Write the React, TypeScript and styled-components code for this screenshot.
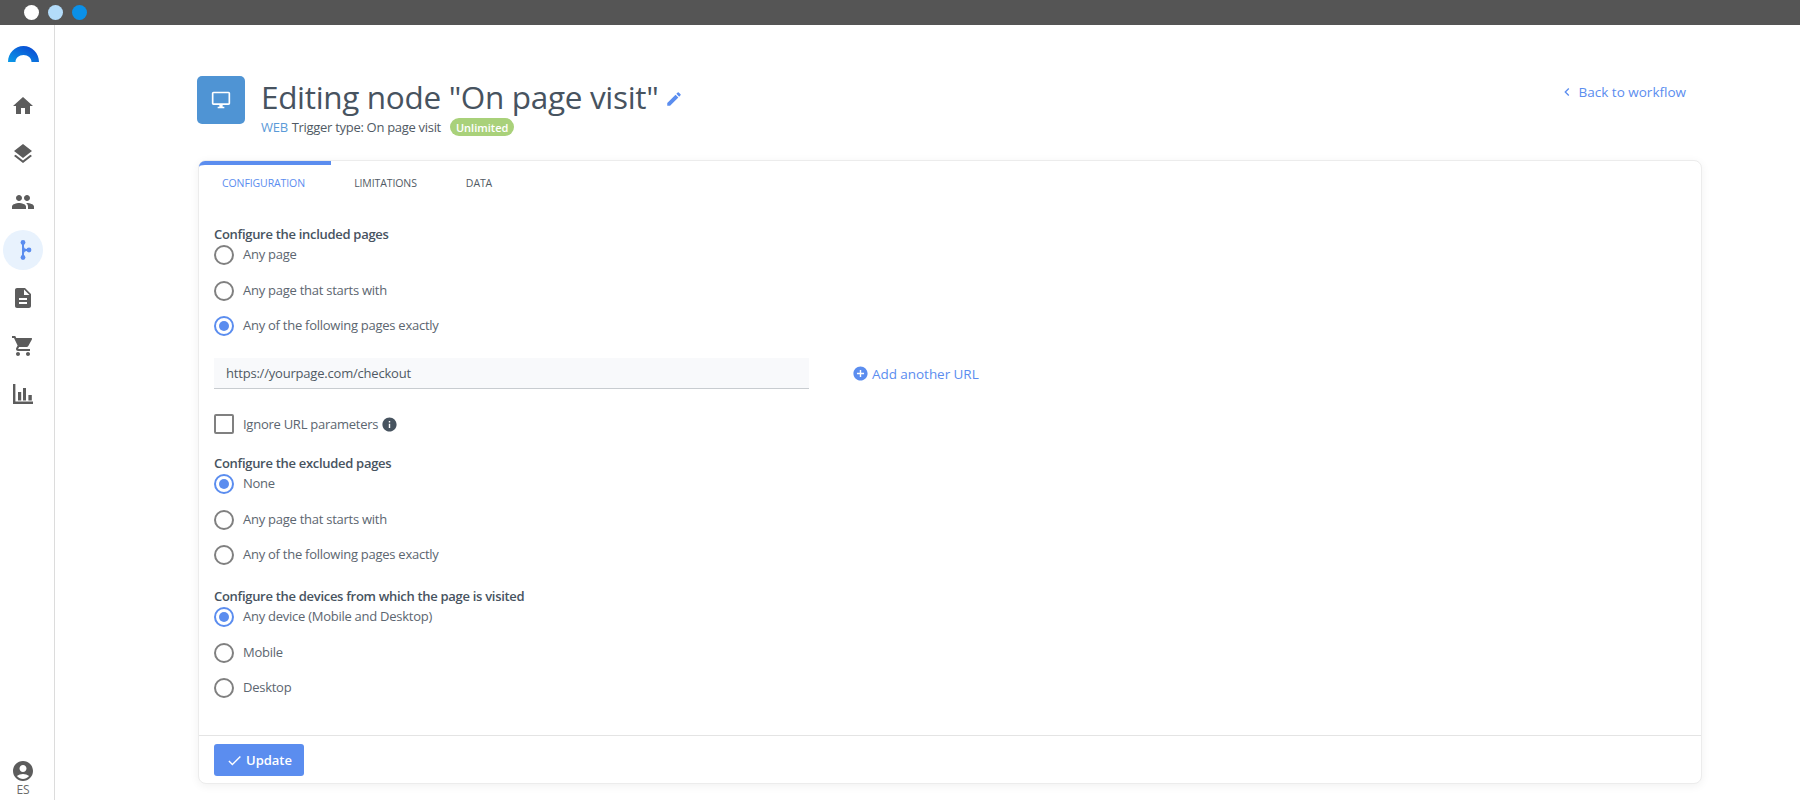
import React from 'react';
import styled, { createGlobalStyle } from 'styled-components';
import {
  MdHome,
  MdLayers,
  MdPeople,
  MdDescription,
  MdShoppingCart,
  MdAccountCircle,
  MdOutlineDesktopWindows,
  MdEdit,
  MdInfo,
  MdAddCircle,
  MdCheck,
  MdChevronLeft,
} from 'react-icons/md';

const GlobalStyle = createGlobalStyle`
  html, body {
    margin: 0;
    padding: 0;
    background: #fff;
    font-family: "Open Sans", "Noto Sans", sans-serif;
    color: #505a64;
  }
  * { box-sizing: border-box; }
`;

const Page = styled.div`
  width: 1800px;
  height: 800px;
  display: flex;
  flex-direction: column;
  overflow: hidden;
`;

const WindowBar = styled.div`
  height: 25px;
  flex-shrink: 0;
  background: #555555;
  display: flex;
  align-items: center;
  gap: 9px;
  padding-left: 24px;
`;

const WindowDot = styled.span<{ $color: string }>`
  width: 15px;
  height: 15px;
  border-radius: 50%;
  background: ${p => p.$color};
`;

const Shell = styled.div`
  flex: 1;
  display: flex;
  min-height: 0;
`;

const Sidebar = styled.nav`
  width: 55px;
  flex-shrink: 0;
  border-right: 1px solid #dcdcdc;
  display: flex;
  flex-direction: column;
  align-items: center;
  padding: 21px 8px 0 0;
`;

const Logo = styled.svg`
  width: 31px;
  height: 16px;
  margin-bottom: 24px;
`;

const NavList = styled.div`
  display: flex;
  flex-direction: column;
  gap: 8px;
  flex: 1;
`;

const NavItem = styled.div<{ $active?: boolean }>`
  width: 40px;
  height: 40px;
  border-radius: 50%;
  display: flex;
  align-items: center;
  justify-content: center;
  color: #5c5c5c;
  background: ${p => (p.$active ? '#e8f2fd' : 'transparent')};
  font-size: 24px;
`;

const Account = styled.div`
  display: flex;
  flex-direction: column;
  align-items: center;
  color: #5c5c5c;
  font-size: 24px;
  padding-bottom: 4px;
  svg { margin-top: -1px; }
`;

const Locale = styled.span`
  font-size: 12px;
  line-height: 13px;
  color: #6a6a6a;
`;

const Main = styled.main`
  flex: 1;
  min-width: 0;
  padding: 51px 98px 0 142px;
`;

const Header = styled.header`
  height: 84px;
  display: flex;
  align-items: flex-start;
`;

const NodeIcon = styled.div`
  width: 48px;
  height: 48px;
  border-radius: 5px;
  background: #4f94d4;
  color: #fff;
  display: flex;
  align-items: center;
  justify-content: center;
  font-size: 20px;
  flex-shrink: 0;
`;

const TitleBlock = styled.div`
  margin-left: 16px;
  flex: 1;
`;

const TitleRow = styled.div`
  display: flex;
  align-items: center;
  height: 41px;
`;

const Title = styled.h1`
  margin: 0;
  font-size: 31.5px;
  line-height: 41px;
  letter-spacing: -0.33px;
  font-weight: 400;
  color: #47535f;
`;

const EditIcon = styled.span`
  display: flex;
  margin-left: 7px;
  margin-top: 5px;
  font-size: 18px;
  color: #5b8def;
`;

const SubRow = styled.div`
  display: flex;
  align-items: center;
  height: 20px;
  font-size: 13px;
  letter-spacing: -0.3px;
  color: #505a64;
`;

const WebTag = styled.span`
  color: #5a9ad8;
  margin-right: 4px;
`;

const Badge = styled.span`
  margin-left: 9px;
  height: 18px;
  padding: 0 6px;
  border-radius: 9px;
  background: #a9d17a;
  color: #fff;
  font-size: 11px;
  letter-spacing: 0;
  font-weight: 600;
  display: flex;
  align-items: center;
`;

const BackLink = styled.a`
  display: flex;
  align-items: center;
  margin: 5px 16px 0 0;
  font-size: 13.5px;
  line-height: 22px;
  color: #5b8def;
  svg { font-size: 16px; margin-right: 4px; }
`;

const Card = styled.section`
  height: 624px;
  margin-left: 1px;
  border: 1px solid #ececec;
  border-radius: 8px;
  box-shadow: 0 2px 10px rgba(0, 0, 0, 0.06);
  display: flex;
  flex-direction: column;
  background: #fff;
`;

const Tabs = styled.div`
  height: 45px;
  display: flex;
  flex-shrink: 0;
`;

const Tab = styled.div<{ $active?: boolean; $width: number }>`
  width: ${p => p.$width}px;
  height: 45px;
  display: flex;
  align-items: center;
  justify-content: center;
  font-size: 10.5px;
  letter-spacing: -0.1px;
  color: ${p => (p.$active ? '#5b8def' : '#505a64')};
  border-top: 4px solid ${p => (p.$active ? '#5b8def' : 'transparent')};
  border-top-left-radius: 6px;
  padding: 0 ${p => (p.$active ? 3 : 0)}px 5px 0;
`;

const Body = styled.div`
  flex: 1;
  padding: 18px 15px 0;
`;

const SectionLabel = styled.div<{ $top?: number }>`
  font-size: 13px;
  letter-spacing: -0.3px;
  line-height: 20px;
  font-weight: 600;
  color: #47535f;
  margin-top: ${p => p.$top ?? 0}px;
  margin-bottom: 1px;
`;

const RadioGroup = styled.div`
  display: flex;
  flex-direction: column;
  gap: 15.5px;
`;

const RadioRow = styled.label`
  display: flex;
  align-items: center;
  height: 20px;
  font-size: 13px;
  letter-spacing: -0.26px;
  color: #5c6670;
`;

const RadioText = styled.span`
  line-height: 18px;
  margin-bottom: 2px;
`;

const RadioMark = styled.span<{ $on?: boolean }>`
  width: 20px;
  height: 20px;
  border-radius: 50%;
  border: 2px solid ${p => (p.$on ? '#5b8def' : '#808080')};
  display: flex;
  align-items: center;
  justify-content: center;
  margin-right: 9px;
  flex-shrink: 0;
  &::after {
    content: '';
    display: ${p => (p.$on ? 'block' : 'none')};
    width: 10px;
    height: 10px;
    border-radius: 50%;
    background: #5b8def;
  }
`;

const UrlRow = styled.div`
  display: flex;
  align-items: center;
  margin-top: 22px;
`;

const UrlInput = styled.div`
  width: 595px;
  height: 31px;
  padding: 0 12px;
  display: flex;
  align-items: center;
  background: #f8f9fb;
  border-bottom: 1px solid #c8ccd0;
  font-size: 13px;
  letter-spacing: -0.2px;
  color: #505a64;
`;

const AddUrl = styled.a`
  display: flex;
  align-items: center;
  margin-left: 43px;
  font-size: 13.5px;
  letter-spacing: -0.05px;
  color: #5b8def;
  svg { font-size: 17px; margin-right: 3px; }
`;

const CheckRow = styled.label`
  display: flex;
  align-items: center;
  height: 20px;
  margin-top: 25px;
  font-size: 13px;
  letter-spacing: -0.26px;
  color: #5c6670;
`;

const CheckMark = styled.span`
  width: 20px;
  height: 20px;
  border: 2px solid #808080;
  border-radius: 2px;
  margin-right: 9px;
`;

const InfoIcon = styled.span`
  display: flex;
  margin-left: 3px;
  font-size: 17px;
  color: #47535f;
`;

const Footer = styled.footer`
  height: 48px;
  flex-shrink: 0;
  border-top: 1px solid #e4e4e4;
  padding: 8px 15px;
`;

const UpdateButton = styled.button`
  width: 90px;
  height: 32px;
  border: 0;
  border-radius: 3px;
  background: #5b8def;
  color: #fff;
  font-family: inherit;
  font-size: 13px;
  font-weight: 600;
  display: flex;
  align-items: center;
  justify-content: center;
  gap: 3px;
  svg { font-size: 17px; }
`;

const FlowIcon = () => (
  <svg width="24" height="24" viewBox="0 0 24 24" fill="none">
    <g stroke="#5b8def" strokeWidth="2">
      <path d="M12 4v16" />
      <path d="M12 8.5c0 2.5 1.5 3.5 4 3.5h2" />
      <path d="M12 15.5c0-2.5 1.5-3.5 4-3.5" />
    </g>
    <g fill="#5b8def">
      <circle cx="12" cy="4.5" r="2.4" />
      <circle cx="12" cy="19.5" r="2.4" />
      <circle cx="18" cy="12" r="2.4" />
    </g>
  </svg>
);

const AxisChartIcon = () => (
  <svg width="24" height="24" viewBox="0 0 24 24" fill="#5c5c5c">
    <path d="M2 2h2.4v17.6H22V22H2z" />
    <path d="M7 10h3.2v8.5H7zM12 6h3v12.5h-3zM17.4 13h3.4v5.5h-3.4z" />
  </svg>
);

const included = ['Any page', 'Any page that starts with'];
const excluded = ['Any page that starts with', 'Any of the following pages exactly'];

const App = () => {
  return (
    <Page>
      <GlobalStyle />
      <WindowBar>
        <WindowDot $color="#ffffff" />
        <WindowDot $color="#b3dcfa" />
        <WindowDot $color="#0a90e8" />
      </WindowBar>
      <Shell>
        <Sidebar>
          <Logo viewBox="0 0 31 16">
            <defs>
              <linearGradient id="logoGrad" x1="0" x2="1" y1="1" y2="0">
                <stop offset="0" stopColor="#0a9be8" />
                <stop offset="1" stopColor="#0a3fd0" />
              </linearGradient>
            </defs>
            <path
              d="M0 16C0 7 7 0 15.5 0S31 7 31 16H23.5C23.5 12 20 9 15.5 9S7.5 12 7.5 16Z"
              fill="url(#logoGrad)"
            />
          </Logo>
          <NavList>
            <NavItem><MdHome /></NavItem>
            <NavItem><MdLayers /></NavItem>
            <NavItem><MdPeople /></NavItem>
            <NavItem $active><FlowIcon /></NavItem>
            <NavItem><MdDescription /></NavItem>
            <NavItem><MdShoppingCart /></NavItem>
            <NavItem><AxisChartIcon /></NavItem>
          </NavList>
          <Account>
            <MdAccountCircle />
            <Locale>ES</Locale>
          </Account>
        </Sidebar>
        <Main>
          <Header>
            <NodeIcon><MdOutlineDesktopWindows /></NodeIcon>
            <TitleBlock>
              <TitleRow>
                <Title>Editing node "On page visit"</Title>
                <EditIcon><MdEdit /></EditIcon>
              </TitleRow>
              <SubRow>
                <WebTag>WEB</WebTag> Trigger type: On page visit
                <Badge>Unlimited</Badge>
              </SubRow>
            </TitleBlock>
            <BackLink><MdChevronLeft /> Back to workflow</BackLink>
          </Header>
          <Card>
            <Tabs>
              <Tab $active $width={132}>CONFIGURATION</Tab>
              <Tab $width={109}>LIMITATIONS</Tab>
              <Tab $width={78}>DATA</Tab>
            </Tabs>
            <Body>
              <SectionLabel>Configure the included pages</SectionLabel>
              <RadioGroup>
                {included.map(text => (
                  <RadioRow key={text}><RadioMark /><RadioText>{text}</RadioText></RadioRow>
                ))}
                <RadioRow><RadioMark $on /><RadioText>Any of the following pages exactly</RadioText></RadioRow>
              </RadioGroup>
              <UrlRow>
                <UrlInput>https://yourpage.com/checkout</UrlInput>
                <AddUrl><MdAddCircle /> Add another URL</AddUrl>
              </UrlRow>
              <CheckRow>
                <CheckMark />
                Ignore URL parameters
                <InfoIcon><MdInfo /></InfoIcon>
              </CheckRow>
              <SectionLabel $top={19}>Configure the excluded pages</SectionLabel>
              <RadioGroup>
                <RadioRow><RadioMark $on /><RadioText>None</RadioText></RadioRow>
                {excluded.map(text => (
                  <RadioRow key={text}><RadioMark /><RadioText>{text}</RadioText></RadioRow>
                ))}
              </RadioGroup>
              <SectionLabel $top={21}>Configure the devices from which the page is visited</SectionLabel>
              <RadioGroup>
                <RadioRow><RadioMark $on /><RadioText>Any device (Mobile and Desktop)</RadioText></RadioRow>
                <RadioRow><RadioMark /><RadioText>Mobile</RadioText></RadioRow>
                <RadioRow><RadioMark /><RadioText>Desktop</RadioText></RadioRow>
              </RadioGroup>
            </Body>
            <Footer>
              <UpdateButton><MdCheck /> Update</UpdateButton>
            </Footer>
          </Card>
        </Main>
      </Shell>
    </Page>
  );
};

export default App;
